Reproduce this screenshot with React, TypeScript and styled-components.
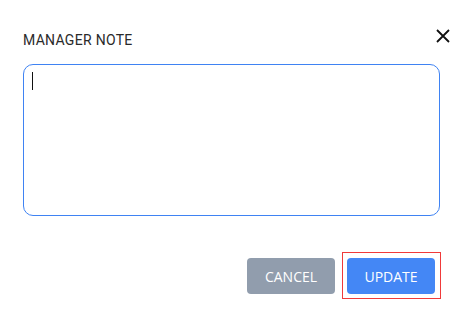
import React from "react";
import styled, { createGlobalStyle } from "styled-components";

const Global = createGlobalStyle`
  html, body { margin: 0; padding: 0; background: #ffffff; }
  * { box-sizing: border-box; }
`;

const Dialog = styled.div`
  width: 462px;
  height: 314px;
  padding: 32px 22px 0 23px;
  background: #ffffff;
  font-family: Roboto, "Liberation Sans", sans-serif;
`;

const Header = styled.div`
  display: flex;
  justify-content: space-between;
  align-items: flex-start;
  height: 16px;
`;

const Title = styled.h2`
  margin: 0;
  font-size: 14px;
  line-height: 16px;
  font-weight: 400;
  color: #2a2a2a;
  letter-spacing: 0.3px;
`;

const CloseButton = styled.button`
  border: none;
  background: transparent;
  padding: 0;
  margin: -3px -10px 0 0;
  width: 14px;
  height: 14px;
  display: flex;
  cursor: pointer;
`;

const NoteBox = styled.div`
  margin-top: 16px;
  height: 152px;
  border: 1px solid #3f83f3;
  border-radius: 10px;
  padding: 7px 8px;
`;

const Caret = styled.span`
  display: block;
  width: 1px;
  height: 18px;
  background: #111111;
`;

const Actions = styled.div`
  margin-top: 42px;
  margin-right: 5px;
  display: flex;
  justify-content: flex-end;
  gap: 12px;
`;

const Button = styled.button<{ $variant: "cancel" | "primary"; $focused?: boolean }>`
  position: relative;
  width: 88px;
  height: 36px;
  border: none;
  border-radius: 4px;
  background: ${(p) => (p.$variant === "primary" ? "#4487f5" : "#919dad")};
  color: #ffffff;
  font-family: "Open Sans", "Noto Sans", sans-serif;
  font-size: 14px;
  font-weight: 400;
  padding: 0;
  cursor: pointer;
  outline: none;

  &::after {
    content: "";
    display: ${(p) => (p.$focused ? "block" : "none")};
    position: absolute;
    left: -5px;
    right: -6px;
    top: -6px;
    bottom: -5px;
    border: 1px solid #f03a3a;
  }
`;

export default function App() {
  return (
    <>
      <Global />
      <Dialog>
        <Header>
          <Title>MANAGER NOTE</Title>
          <CloseButton aria-label="Close">
            <svg width="14" height="14" viewBox="0 0 14 14">
              <path d="M1 1L13 13M13 1L1 13" stroke="#111" strokeWidth="1.8" />
            </svg>
          </CloseButton>
        </Header>
        <NoteBox>
          <Caret />
        </NoteBox>
        <Actions>
          <Button $variant="cancel">CANCEL</Button>
          <Button $variant="primary" $focused>
            UPDATE
          </Button>
        </Actions>
      </Dialog>
    </>
  );
}
